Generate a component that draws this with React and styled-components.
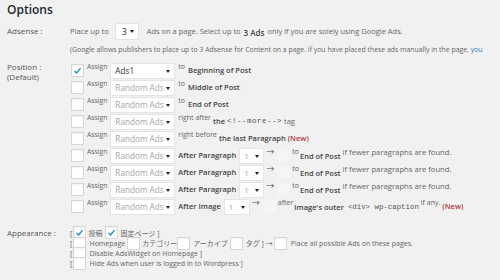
import React from "react";
import styled, { createGlobalStyle } from "styled-components";

const GlobalStyle = createGlobalStyle`
  html, body {
    margin: 0;
    padding: 0;
    background: #f1f1f1;
  }
  body {
    font-family: "Open Sans", "Noto Sans CJK JP", sans-serif;
    color: #555;
    overflow: hidden;
  }
`;

const Page = styled.div`
  width: 500px;
  height: 280px;
  padding: 2px 0 0 7px;
  box-sizing: border-box;
  overflow: hidden;
`;

const Heading = styled.h2`
  margin: 0 0 4px;
  font-size: 12px;
  font-weight: 600;
  color: #23282d;
  line-height: 16px;
`;

const Section = styled.div`
  display: flex;
  margin-bottom: ${(p) => p.$gap || 0}px;
`;

const Label = styled.div`
  width: 63px;
  flex-shrink: 0;
  font-size: 8px;
  line-height: ${(p) => p.$lh || 11}px;
  padding-top: ${(p) => p.$top || 0}px;
  color: #555;
`;

const Body = styled.div`
  display: flex;
  flex-direction: column;
  min-width: 0;
`;

const Line = styled.div`
  display: flex;
  align-items: center;
  height: ${(p) => p.$h || 17}px;
  white-space: nowrap;
`;

const Small = styled.span`
  font-size: ${(p) => p.$fs || 7}px;
  align-self: flex-start;
  line-height: 10px;
  margin: ${(p) => p.$m || "0 3px"};
  color: #666;
`;

const Strong = styled.span`
  font-size: ${(p) => p.$fs || 7.5}px;
  font-weight: 600;
  color: #444;
  margin: ${(p) => p.$m || "0 3px 2px 0"};
`;

const Red = styled.span`
  font-size: 7.5px;
  font-weight: 600;
  color: #b03a3a;
  margin-bottom: 2px;
`;

const Mono = styled.span`
  font-family: "Liberation Mono", monospace;
  font-size: ${(p) => p.$fs || 7.5}px;
  letter-spacing: ${(p) => p.$ls || 0}px;
  color: #555;
  margin: ${(p) => p.$m || "0 2px 2px"};
`;

const Box = styled.span`
  width: 11px;
  height: 11px;
  flex-shrink: 0;
  background: ${(p) => (p.$faint ? "#f5f5f5" : "#fff")};
  border: 1px solid ${(p) => (p.$faint ? "#f4f4f4" : "#d6d6d6")};
  box-shadow: ${(p) => (p.$faint ? "none" : "inset 0 1px 2px rgba(0,0,0,0.06)")};
  display: flex;
  align-items: center;
  justify-content: center;
  margin: ${(p) => p.$m || "0"};
`;

const SelectBox = styled.span`
  position: relative;
  display: flex;
  align-items: center;
  width: ${(p) => p.$w}px;
  height: ${(p) => p.$h || 16}px;
  box-sizing: border-box;
  background: #fff;
  border: 1px solid #e4e4e4;
  padding-left: ${(p) => p.$pl || 4}px;
  font-size: ${(p) => p.$fs || 8.2}px;
  color: ${(p) => (p.$dim ? "#a5a5a5" : "#333")};
  flex-shrink: 0;
  overflow: hidden;
  margin: ${(p) => p.$m || "0"};

  &::after {
    content: "";
    position: absolute;
    right: 4px;
    top: 50%;
    margin-top: -1px;
    border-left: 2px solid transparent;
    border-right: 2px solid transparent;
    border-top: 3px solid #222;
  }
`;

const Arrow = styled.span`
  font-size: 8px;
  align-self: flex-start;
  line-height: 10px;
  margin: ${(p) => p.$m || "0 3px"};
  color: #555;
`;

const Text = styled.span`
  font-size: ${(p) => p.$fs || 7.5}px;
  margin: ${(p) => p.$m || "0 3px"};
  color: #666;
`;

const Link = styled.span`
  color: #2a7fb8;
`;

const Check = () => (
  <svg width="9" height="9" viewBox="0 0 10 10">
    <path d="M1.8 5.6 L4 7.8 L8.4 2.4" fill="none" stroke="#1e8cbe" strokeWidth="1.5" />
  </svg>
);

const CheckBox = ({ checked, m }) => <Box $m={m}>{checked && <Check />}</Box>;

const Assign = ({ checked, ad }) => (
  <>
    <CheckBox checked={checked} m="0 0 0 1px" />
    <Small $fs={6.8} $m="0 3px 0 3px">Assign</Small>
    <SelectBox $w={65} $dim={ad !== "Ads1"}>{ad}</SelectBox>
  </>
);

const AfterRow = ({ label, sel, children }) => (
  <Line>
    <Assign ad="Random Ads" />
    <Strong $m="0 3px 2px 3px">{label}</Strong>
    <SelectBox $w={sel} $dim $fs={8}>1</SelectBox>
    <Arrow $m="0 3px 0 2px">→</Arrow>
    <Box $faint $m="0 1px 0 0" />
    {children}
  </Line>
);

const App = () => {
  return (
    <Page>
      <GlobalStyle />
      <Heading>Options</Heading>

      <Section $gap={4}>
        <Label $top={3}>Adsense :</Label>
        <Body>
          <Line $h={18}>
            <Text $m="0 6px 0 0">Place up to</Text>
            <SelectBox $w={24} $h={17} $fs={9} $pl={6}>3</SelectBox>
            <Text $m="0 3px 0 8px">Ads on a page. Select up to</Text>
            <Strong $fs={8} $m="2px 3px 0 0">3 Ads</Strong>
            <Text $m="0">only if you are solely using Google Ads.</Text>
          </Line>
          <Line $h={18}>
            <Text $fs={6.9} $m="0">
              (Google allows publishers to place up to 3 Adsense for Content on a page. If you have
              placed these ads manually in the page, <Link>you</Link>
            </Text>
          </Line>
        </Body>
      </Section>

      <Section $gap={12}>
        <Label $lh={10} $top={0}>
          Position :<br />(Default)
        </Label>
        <Body>
          <Line>
            <Assign checked ad="Ads1" />
            <Small>to</Small>
            <Strong>Beginning of Post</Strong>
          </Line>
          <Line>
            <Assign ad="Random Ads" />
            <Small>to</Small>
            <Strong>Middle of Post</Strong>
          </Line>
          <Line>
            <Assign ad="Random Ads" />
            <Small>to</Small>
            <Strong>End of Post</Strong>
          </Line>
          <Line>
            <Assign ad="Random Ads" />
            <Small $m="0 2px 0 3px">right after</Small>
            <Strong $m="0 0 2px 0">the</Strong>
            <Mono $ls={0.5}>&lt;!--more--&gt;</Mono>
            <Text $m="0 0 2px 0">tag</Text>
          </Line>
          <Line>
            <Assign ad="Random Ads" />
            <Small $m="0 2px 0 3px">right before</Small>
            <Strong $m="0 2px 2px 0">the last Paragraph</Strong>
            <Red>(New)</Red>
          </Line>
          {[0, 1, 2].map((i) => (
            <AfterRow key={i} label="After Paragraph" sel={25}>
              <Small $m="0 1px 0 1px">to</Small>
              <Strong $m="0 2px 0 0">End of Post</Strong>
              <Small $fs={7.7} $m="0">if fewer paragraphs are found.</Small>
            </AfterRow>
          ))}
          <AfterRow label="After Image" sel={26}>
            <Small $m="0 1px 0 1px">after</Small>
            <Strong $m="0 2px 0 0">Image's outer</Strong>
            <Mono $fs={7.4} $m="0 2px 0 2px">&lt;div&gt; wp-caption</Mono>
            <Small $m="0 2px 0 0">if any.</Small>
            <Red>(New)</Red>
          </AfterRow>
        </Body>
      </Section>

      <Section>
        <Label $top={0}>Appearance :</Label>
        <Body>
          <Line $h={11}>
            <Text $m="0 1px 0 0">[</Text>
            <CheckBox checked />
            <Text $fs={7} $m="0 3px 0 2px">投稿</Text>
            <CheckBox checked />
            <Text $fs={7} $m="0 0 0 2px">固定ページ ]</Text>
          </Line>
          <Line $h={10}>
            <Text $m="0 1px 0 0">[</Text>
            <CheckBox />
            <Text $fs={7} $m="0 2px 0 3px">Homepage</Text>
            <CheckBox />
            <Text $fs={7} $m="0 0 0 2px">カテゴリー</Text>
            <CheckBox />
            <Text $fs={7} $m="0 2px 0 3px">アーカイブ</Text>
            <CheckBox />
            <Text $fs={7} $m="0 1px 0 3px">タグ ]</Text>
            <Text $fs={7} $m="0 1px">→</Text>
            <CheckBox />
            <Text $fs={7} $m="0 0 0 4px">Place all possible Ads on these pages.</Text>
          </Line>
          <Line $h={10}>
            <Text $m="0 1px 0 0">[</Text>
            <CheckBox />
            <Text $fs={7} $m="0 0 0 3px">Disable AdsWidget on Homepage ]</Text>
          </Line>
          <Line $h={10}>
            <Text $m="0 1px 0 0">[</Text>
            <CheckBox />
            <Text $fs={7} $m="0 0 0 3px">Hide Ads when user is logged in to Wordpress ]</Text>
          </Line>
        </Body>
      </Section>
    </Page>
  );
};

export default App;
